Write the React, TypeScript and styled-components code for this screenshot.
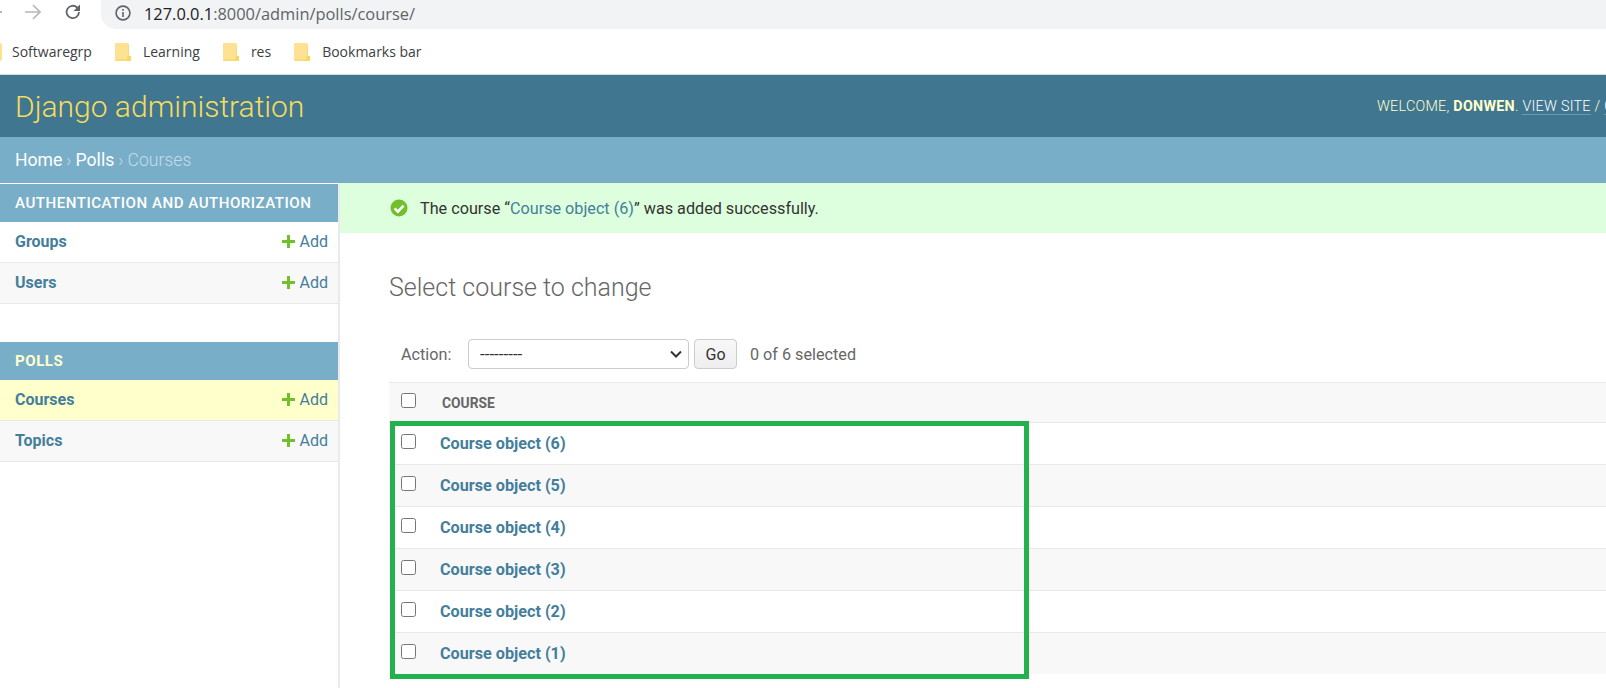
import React from "react";
import styled, { createGlobalStyle } from "styled-components";

const GlobalStyle = createGlobalStyle`
  html, body {
    margin: 0;
    padding: 0;
    background: #fff;
    overflow: hidden;
  }
  body {
    font-family: Roboto, "Liberation Sans", sans-serif;
    color: #333;
  }
`;

const sidebarGroups = [
  {
    title: "Authentication and Authorization",
    current: false,
    models: [{ name: "Groups" }, { name: "Users" }],
  },
  {
    title: "Polls",
    current: true,
    models: [{ name: "Courses", selected: true }, { name: "Topics" }],
  },
];

const bookmarks = ["Learning", "res", "Bookmarks bar"];
const courses = [6, 5, 4, 3, 2, 1];

const chevron =
  "data:image/svg+xml,%3Csvg xmlns='http://www.w3.org/2000/svg' viewBox='0 0 12 8'%3E%3Cpath d='M1 1.5l5 5 5-5' fill='none' stroke='%23333' stroke-width='2'/%3E%3C/svg%3E";

const Folder: React.FC = () => (
  <FolderIcon viewBox="0 0 16 18">
    <path d="M1 0h11a2 2 0 0 1 2 2v14H1a1 1 0 0 1-1-1V1a1 1 0 0 1 1-1z" fill="#fde293" />
    <path d="M12 13h4v4a1 1 0 0 1-1 1h-3z" fill="#f9d65c" />
    <path d="M14 2v11h-2v5H1a1 1 0 0 1-1-1v-1h13V2z" fill="#fbdc74" />
  </FolderIcon>
);

const PlusIcon: React.FC = () => (
  <AddGlyph viewBox="0 0 13 13">
    <path d="M5 0h3v5h5v3H8v5H5V8H0V5h5z" fill="#70bf2b" />
  </AddGlyph>
);

const App: React.FC = () => {
  return (
    <Page>
      <GlobalStyle />
      <BrowserBar>
        <NavIcon viewBox="0 0 18 18" $left={-14}>
          <path d="M16 9H2M9 2 2 9l7 7" fill="none" stroke="#9aa0a6" strokeWidth="1.6" />
        </NavIcon>
        <NavIcon viewBox="0 0 18 18" $left={20}>
          <path d="M1 9h15M9 2l7 7-7 7" fill="none" stroke="#b4b7bb" strokeWidth="1.7" />
        </NavIcon>
        <NavIcon viewBox="0 0 18 18" $left={22}>
          <path
            d="M15 9a6.2 6.2 0 1 1-1.9-4.5L15.5 7"
            fill="none"
            stroke="#5f6368"
            strokeWidth="1.8"
          />
          <path d="M16 1.5V8H9.5z" fill="#5f6368" />
        </NavIcon>
        <UrlBar>
          <InfoIcon viewBox="0 0 16 16">
            <circle cx="8" cy="8" r="6.9" fill="none" stroke="#5f6368" strokeWidth="1.6" />
            <path d="M7.2 7h1.6v5H7.2zM7.2 4h1.6v1.7H7.2z" fill="#5f6368" />
          </InfoIcon>
          <UrlHost>127.0.0.1</UrlHost>
          <UrlRest>:8000/admin/polls/course/</UrlRest>
        </UrlBar>
      </BrowserBar>
      <BookmarksBar>
        <CutFolder />
        <BookmarkLabel>Softwaregrp</BookmarkLabel>
        {bookmarks.map((label) => (
          <Bookmark key={label}>
            <Folder />
            <BookmarkLabel>{label}</BookmarkLabel>
          </Bookmark>
        ))}
      </BookmarksBar>

      <Header>
        <Branding>Django administration</Branding>
        <UserTools>
          Welcome, <strong>donwen</strong>. <UserLink>View site</UserLink> /{" "}
          <UserLink>Change password</UserLink> / <UserLink>Log out</UserLink>
        </UserTools>
      </Header>
      <Breadcrumbs>
        <CrumbLink>Home</CrumbLink> <CrumbSep>›</CrumbSep> <CrumbLink>Polls</CrumbLink>{" "}
        <CrumbSep>›</CrumbSep> Courses
      </Breadcrumbs>

      <Main>
        <Sidebar>
          {sidebarGroups.map((group) => (
            <AppGroup key={group.title}>
              <Caption $current={group.current}>{group.title}</Caption>
              {group.models.map((model, i) => (
                <ModelRow key={model.name} $alt={i % 2 === 1} $selected={!!model.selected}>
                  <ModelName>{model.name}</ModelName>
                  <AddLink>
                    <PlusIcon />
                    Add
                  </AddLink>
                </ModelRow>
              ))}
            </AppGroup>
          ))}
        </Sidebar>

        <Content>
          <Message>
            <svg width="18" height="18" viewBox="0 0 18 18">
              <circle cx="9" cy="9" r="8.5" fill="#70bf2b" />
              <path d="M4.6 9.4 7.8 12.6 13.6 6.6" fill="none" stroke="#fff" strokeWidth="2.6" />
            </svg>
            <span>
              The course “<MessageLink>Course object (6)</MessageLink>” was added successfully.
            </span>
          </Message>
          <ContentInner>
            <Title>Select course to change</Title>
            <Actions>
              <ActionLabel>Action:</ActionLabel>
              <ActionSelect defaultValue="">
                <option value="">---------</option>
              </ActionSelect>
              <GoButton>Go</GoButton>
              <SelectedCount>0 of 6 selected</SelectedCount>
            </Actions>
            <TableWrap>
              <TableHead>
                <CheckCell>
                  <Check type="checkbox" />
                </CheckCell>
                <HeadLabel>Course</HeadLabel>
              </TableHead>
              {courses.map((n, i) => (
                <TableRow key={n} $alt={i % 2 === 1}>
                  <CheckCell>
                    <Check type="checkbox" />
                  </CheckCell>
                  <RowLink>Course object ({n})</RowLink>
                </TableRow>
              ))}
              <Highlight />
            </TableWrap>
          </ContentInner>
        </Content>
      </Main>
    </Page>
  );
};

export default App;

const Page = styled.div`
  width: 1606px;
  height: 688px;
  display: flex;
  flex-direction: column;
  overflow: hidden;
`;

const BrowserBar = styled.div`
  height: 29px;
  display: flex;
  align-items: center;
  position: relative;
`;

const NavIcon = styled.svg<{ $left: number }>`
  width: 18px;
  height: 18px;
  flex: none;
  margin-left: ${(p) => p.$left}px;
  margin-top: -5px;
`;

const UrlBar = styled.div`
  flex: 1;
  height: 29px;
  margin-left: 19px;
  padding-left: 14px;
  background: #f1f3f4;
  border-radius: 0 0 0 15px;
  display: flex;
  align-items: center;
  font-family: "Open Sans", sans-serif;
  font-size: 16.4px;
`;

const InfoIcon = styled.svg`
  width: 16px;
  height: 16px;
  margin-right: 13px;
  margin-top: -3px;
`;

const UrlHost = styled.span`
  color: #202124;
  margin-top: -3px;
`;

const UrlRest = styled.span`
  color: #5f6368;
  margin-top: -3px;
`;

const BookmarksBar = styled.div`
  height: 45px;
  display: flex;
  align-items: center;
  border-bottom: 1px solid #dadce0;
  padding-left: 12px;
  position: relative;
  box-sizing: content-box;
`;

const CutFolder = styled.div`
  position: absolute;
  left: -14px;
  top: 14px;
  width: 16px;
  height: 18px;
  background: #fde293;
  border-radius: 2px;
`;

const Bookmark = styled.div`
  display: flex;
  align-items: center;
  gap: 12px;
  margin-left: 23px;
`;

const FolderIcon = styled.svg`
  width: 16px;
  height: 18px;
  flex: none;
`;

const BookmarkLabel = styled.span`
  font-family: "Open Sans", sans-serif;
  font-size: 14px;
  color: #3c4043;
`;

const Header = styled.header`
  height: 62px;
  flex: none;
  background: #417690;
  display: flex;
  align-items: center;
  padding-left: 15px;
  overflow: hidden;
`;

const Branding = styled.h1`
  flex: 0 0 1362px;
  margin: 0;
  font-size: 30px;
  font-weight: 300;
  color: #f5dd5d;
`;

const UserTools = styled.div`
  flex: none;
  white-space: nowrap;
  font-size: 14.3px;
  font-weight: 300;
  letter-spacing: 0.02em;
  text-transform: uppercase;
  color: #ffc;

  strong {
    font-weight: 700;
  }
`;

const UserLink = styled.a`
  color: #fff;
  border-bottom: 1px solid rgba(255, 255, 255, 0.25);
`;

const Breadcrumbs = styled.nav`
  height: 46px;
  flex: none;
  box-sizing: border-box;
  background: #79aec8;
  padding-left: 15px;
  display: flex;
  align-items: center;
  gap: 4px;
  font-size: 17.6px;
  font-weight: 300;
  color: #c4dce8;
`;

const CrumbLink = styled.a`
  color: #fff;
  font-weight: 400;
`;

const CrumbSep = styled.span`
  color: #c4dce8;
`;

const Main = styled.main`
  flex: 1;
  display: flex;
  min-height: 0;
`;

const Sidebar = styled.aside`
  flex: none;
  width: 338px;
  border-right: 2px solid #eaeaea;
  padding-top: 1px;
  background: #fff;
`;

const AppGroup = styled.section`
  margin-bottom: 38px;
`;

const Caption = styled.div<{ $current: boolean }>`
  height: 38px;
  box-sizing: border-box;
  padding-left: 15px;
  display: flex;
  align-items: center;
  background: #79aec8;
  color: ${(p) => (p.$current ? "#ffffcc" : "#fff")};
  font-size: 15.1px;
  font-weight: ${(p) => (p.$current ? 700 : 500)};
  letter-spacing: 0.5px;
  text-transform: uppercase;
`;

const ModelRow = styled.div<{ $alt: boolean; $selected: boolean }>`
  height: 41px;
  box-sizing: border-box;
  padding: 0 10px 1px 15px;
  display: flex;
  align-items: center;
  justify-content: space-between;
  border-bottom: 1px solid #e8e8e8;
  background: ${(p) => (p.$selected ? "#ffc" : p.$alt ? "#f8f8f8" : "#fff")};
`;

const ModelName = styled.a`
  color: #447e9b;
  font-size: 16px;
  font-weight: 700;
`;

const AddLink = styled.a`
  display: flex;
  align-items: center;
  gap: 5px;
  color: #447e9b;
  font-size: 16px;
`;

const AddGlyph = styled.svg`
  width: 13px;
  height: 13px;
`;

const Content = styled.div`
  flex: 1;
  min-width: 0;
`;

const Message = styled.div`
  height: 50px;
  box-sizing: border-box;
  padding-left: 50px;
  display: flex;
  align-items: center;
  gap: 12px;
  background: #dfd;
  color: #333;
  font-size: 16.2px;
`;

const MessageLink = styled.a`
  color: #447e9b;
`;

const ContentInner = styled.div`
  padding: 40px 0 0 49px;
`;

const Title = styled.h2`
  margin: 0;
  height: 30px;
  line-height: 30px;
  font-size: 25px;
  font-weight: 300;
  color: #666;
`;

const Actions = styled.div`
  margin-top: 35px;
  height: 32px;
  display: flex;
  align-items: center;
  padding-left: 12px;
  color: #666;
  font-size: 16.2px;
  margin-bottom: 12px;
`;

const ActionLabel = styled.span`
  width: 67px;
  flex: none;
`;

const ActionSelect = styled.select`
  appearance: none;
  width: 221px;
  height: 30px;
  box-sizing: border-box;
  border: 1px solid #ccc;
  border-radius: 4px;
  padding: 0 6px 0 11px;
  background: #fff url("${chevron}") no-repeat right 6px center / 12px 8px;
  color: #333;
  font-family: Roboto, sans-serif;
  font-size: 17px;
`;

const GoButton = styled.button`
  margin-left: 5px;
  width: 43px;
  height: 30px;
  border: 1px solid #ccc;
  border-radius: 4px;
  padding: 0;
  background: linear-gradient(#f8f8f8, #eee);
  color: #333;
  font-family: Roboto, sans-serif;
  font-size: 16px;
`;

const SelectedCount = styled.span`
  margin-left: 13px;
`;

const TableWrap = styled.div`
  position: relative;
  border-top: 1px solid #e8e8e8;
`;

const TableHead = styled.div`
  height: 39px;
  display: flex;
  align-items: center;
  background: #f8f8f8;
`;

const HeadLabel = styled.span`
  margin-left: 2px;
  color: #666;
  font-size: 13.8px;
  font-weight: 700;
  text-transform: uppercase;
`;

const TableRow = styled.div<{ $alt: boolean }>`
  height: 42px;
  box-sizing: border-box;
  display: flex;
  align-items: center;
  border-top: 1px solid #e8e8e8;
  background: ${(p) => (p.$alt ? "#f8f8f8" : "#fff")};

  &:last-of-type {
    border-bottom: 2px solid #e8e8e8;
    height: 44px;
  }
`;

const CheckCell = styled.div`
  flex: none;
  width: 51px;
  padding-left: 12px;
  box-sizing: border-box;
  display: flex;
  margin-top: -5px;
`;

const Check = styled.input`
  width: 15px;
  height: 15px;
  margin: 0;
`;

const RowLink = styled.a`
  color: #447e9b;
  font-size: 16.2px;
  font-weight: 700;
`;

// green annotation drawn over the first rows of the table
const Highlight = styled.div`
  position: absolute;
  left: 1px;
  top: 38px;
  width: 639px;
  height: 258px;
  box-sizing: border-box;
  border: 5px solid #22b14c;
  pointer-events: none;
`;
